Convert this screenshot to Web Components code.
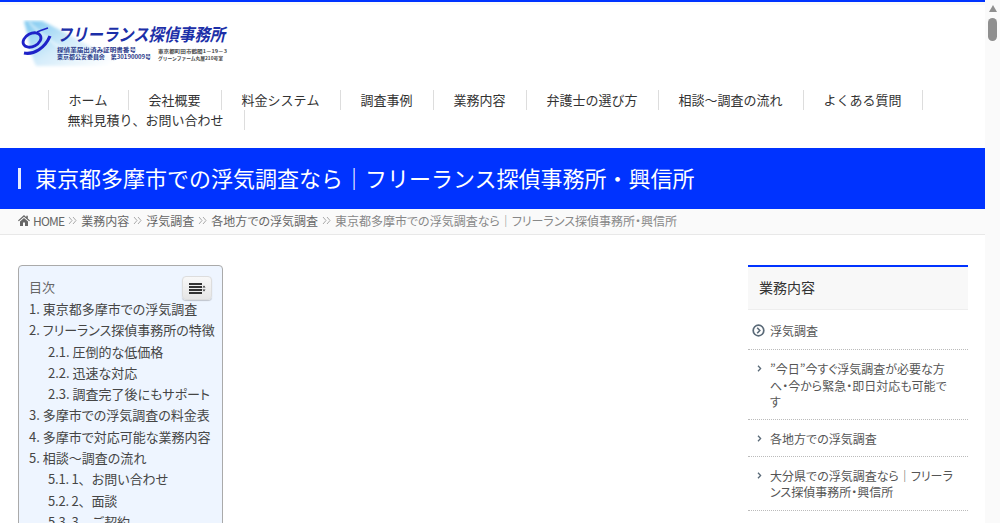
<!DOCTYPE html>
<html lang="ja">
<head>
<meta charset="utf-8">
<title>東京都多摩市での浮気調査なら</title>
<style>
  html, body { margin: 0; height: 523px; overflow: hidden; background: #fff; }
  body { font-family: "Noto Sans CJK JP", "Liberation Sans", sans-serif; color: #555; }
  .app { display: flex; height: 523px; overflow: hidden; }
  .page { width: 985px; flex: none; display: block; height: 523px; overflow: hidden; }
</style>
</head>
<body>
<div class="app">
  <div class="page">
    <site-header></site-header>
    <title-band>東京都多摩市での浮気調査なら｜フリーランス探偵事務所・興信所</title-band>
    <bread-crumb></bread-crumb>
    <main-area></main-area>
  </div>
  <fake-scrollbar></fake-scrollbar>
</div>

<script>
const navItems = ['ホーム', '会社概要', '料金システム', '調査事例', '業務内容', '弁護士の選び方', '相談～調査の流れ', 'よくある質問', '無料見積り、お問い合わせ'];

const tocItems = [
  [0, '1. 東京都多摩市での浮気調査'],
  [0, '2. フリーランス探偵事務所の特徴'],
  [1, '2.1. 圧倒的な低価格'],
  [1, '2.2. 迅速な対応'],
  [1, '2.3. 調査完了後にもサポート'],
  [0, '3. 多摩市での浮気調査の料金表'],
  [0, '4. 多摩市で対応可能な業務内容'],
  [0, '5. 相談～調査の流れ'],
  [2, '5.1. 1、お問い合わせ'],
  [2, '5.2. 2、面談'],
  [2, '5.3. 3、ご契約'],
];

const sideItems = [
  '”今日”今すぐ浮気調査が必要な方<br>へ・今から緊急・即日対応も可能で<br>す',
  '各地方での浮気調査',
  '大分県での浮気調査なら｜フリーラ<br>ンス探偵事務所・興信所',
];

class SiteHeader extends HTMLElement {
  constructor() {
    super();
    const root = this.attachShadow({ mode: 'open' });
    const links = navItems.map((t) => `<a>${t}</a>`).join('');
    root.innerHTML = `
      <style>
        :host { display: block; height: 148px; box-sizing: border-box; border-top: 2px solid #0033ff; background: #fff; }
        .strip { height: 3px; background: #fafafa; }
        .logo { display: block; margin: 15px 0 0 20px; width: 212px; height: 50px; }
        nav { display: flex; flex-wrap: wrap; margin: 20px 40px 0 48px; font-size: 13px; line-height: 20px; color: #333; font-kerning: none; }
        a { padding: 0 20.5px 0 19.5px; border-right: 1px solid #ddd; white-space: nowrap; }
        a:first-child { border-left: 1px solid #ddd; }
      </style>
      <div class="strip"></div>
      <svg class="logo" viewBox="0 0 212 50">
        <defs>
          <linearGradient id="sky" x1="0" y1="0" x2="1" y2="0.7">
            <stop offset="0" stop-color="#7cc8f0"/>
            <stop offset="0.5" stop-color="#d4ecfa"/>
            <stop offset="1" stop-color="#ffffff"/>
          </linearGradient>
          <filter id="soft"><feGaussianBlur stdDeviation="1.6"/></filter>
        </defs>
        <path d="M4 1 H22 C42 10 70 28 112 46 H16 C10 34 8 14 4 1Z" fill="url(#sky)" filter="url(#soft)"/>
        <path d="M9 2 C16 10 30 22 60 40" fill="none" stroke="#fff" stroke-width="2" opacity="0.6" filter="url(#soft)"/>
        <g fill="none" stroke="#1e22c8">
          <ellipse cx="12" cy="20" rx="9.5" ry="6.5" transform="rotate(-28 12 20)" stroke-width="2.8"/>
          <path d="M17 12 C21 10 25 9 28 8" stroke-width="1.4"/>
          <path d="M4 33 C14 35 25 28 30 16" stroke-width="3.2"/>
        </g>
        <text x="37" y="21" font-size="17.4" font-weight="700" font-style="italic" fill="#1c2fa8" textLength="168" lengthAdjust="spacingAndGlyphs">フリーランス探偵事務所</text>
        <text x="37" y="31.5" font-size="5.6" font-weight="700" fill="#2a3a8a" textLength="79" lengthAdjust="spacingAndGlyphs">探偵業届出済み証明書番号</text>
        <text x="37" y="39" font-size="5.6" font-weight="700" fill="#2a3a8a" textLength="94" lengthAdjust="spacingAndGlyphs">東京都公安委員会　第30190009号</text>
        <text x="138" y="33" font-size="4.8" font-weight="700" fill="#444" textLength="69" lengthAdjust="spacingAndGlyphs">東京都町田市鶴間1－19－3</text>
        <text x="138" y="39.5" font-size="4.8" font-weight="700" fill="#444" textLength="65" lengthAdjust="spacingAndGlyphs">グリーンファーム丸屋210号室</text>
      </svg>
      <nav>${links}</nav>`;
  }
}

class TitleBand extends HTMLElement {
  constructor() {
    super();
    const root = this.attachShadow({ mode: 'open' });
    root.innerHTML = `
      <style>
        :host { display: flex; align-items: center; height: 61px; background: #0033ff; padding-left: 18px; }
        .bar { width: 3px; height: 21px; margin: 0 14px 1px 0; background-image: radial-gradient(#fff 0.6px, #cdd6ff 0.8px); background-size: 2px 2px; }
        h1 { margin: 0 0 3px; font-size: 22px; font-weight: 400; line-height: 30px; color: #fff; white-space: nowrap; }
      </style>
      <span class="bar"></span>
      <h1><slot></slot></h1>`;
  }
}

class BreadCrumb extends HTMLElement {
  constructor() {
    super();
    const root = this.attachShadow({ mode: 'open' });
    const parts = ['業務内容', '浮気調査', '各地方での浮気調査', '東京都多摩市での浮気調査なら｜フリーランス探偵事務所・興信所'];
    const chev = `<svg class="sep" viewBox="0 0 9 9"><path d="M1 1l3 3.5-3 3.5M5 1l3 3.5-3 3.5" fill="none" stroke="#aaa" stroke-width="1"/></svg>`;
    const html = parts.map((p, i) => `${chev}<span class="${i === 3 ? 'last' : ''}">${p}</span>`).join('');
    root.innerHTML = `
      <style>
        :host { display: flex; align-items: center; height: 26px; box-sizing: border-box; padding: 0 0 2px 18px; background: #fafafa; border-bottom: 1px solid #e8e8e8; font-size: 12px; color: #666; white-space: nowrap; font-feature-settings: "palt"; }
        .home { width: 12px; height: 11px; margin-right: 3px; }
        .word { letter-spacing: -0.8px; }
        .sep { width: 9px; height: 9px; margin: 0 4px; }
        .last { color: #888; }
      </style>
      <svg class="home" viewBox="0 0 12 11"><path d="M6 0L0 5.5l.8.8L6 1.7l5.2 4.6.8-.8L9.8 3.5V.8H8.3v1.4zM2 6.6V11h3V7.6h2V11h3V6.6L6 3z" fill="#666"/></svg>
      <span class="word">HOME</span>${html}`;
  }
}

class TocBox extends HTMLElement {
  constructor() {
    super();
    const root = this.attachShadow({ mode: 'open' });
    const rows = tocItems.map(([lv, t]) => `<li class="lv${lv}">${t}</li>`).join('');
    root.innerHTML = `
      <style>
        :host { display: block; width: 205px; box-sizing: border-box; border: 1px solid #aaa; border-radius: 4px; background: #eef5ff; padding: 10px; font-size: 13px; color: #454545; font-feature-settings: "palt"; }
        .head { display: flex; justify-content: space-between; align-items: flex-start; height: 24px; margin-bottom: -2px; }
        .label { font-size: 13px; line-height: 22px; color: #666; }
        .toggle { display: flex; align-items: center; justify-content: center; width: 30px; height: 24px; box-sizing: border-box; border: 1px solid #ddd; border-radius: 4px; background: linear-gradient(#f8f8f8, #e6e6e6); box-shadow: 0 1px 1px #0003; }
        ul { list-style: none; margin: 0; padding: 0; }
        li { line-height: 21.3px; white-space: nowrap; }
        .lv1, .lv2 { padding-left: 19px; }
        .lv2 { font-feature-settings: normal; letter-spacing: -0.2px; }
      </style>
      <div class="head">
        <span class="label">目次</span>
        <span class="toggle">
          <svg width="17" height="11" viewBox="0 0 17 11"><path d="M0 0h13v2H0zM0 3h13v2H0zM0 6h13v2H0zM0 9h13v2H0z" fill="#333"/><path d="M13.5 4.5l1.5-2 1.5 2zM13.5 6.5l1.5 2 1.5-2z" fill="#333"/></svg>
        </span>
      </div>
      <ul>${rows}</ul>`;
  }
}

class SideMenu extends HTMLElement {
  constructor() {
    super();
    const root = this.attachShadow({ mode: 'open' });
    const chev = `<svg class="chev" viewBox="0 0 5 7"><path d="M1 .8L3.6 3.5 1 6.2" fill="none" stroke="#5a6a78" stroke-width="1.3"/></svg>`;
    const rows = sideItems.map((t) => `<li>${chev}<span>${t}</span></li>`).join('');
    root.innerHTML = `
      <style>
        :host { display: block; width: 220px; font-size: 12px; color: #555; font-feature-settings: "palt"; }
        h3 { margin: 0; height: 41px; line-height: 41px; padding: 0 0 1px 11px; border-top: 2px solid #0033ff; border-bottom: 1px solid #eee; background: #f8f8f8; font-size: 14px; font-weight: 400; color: #333; font-feature-settings: normal; }
        ul { list-style: none; margin: 0; padding: 0; }
        li { display: flex; padding: 11px 4px 9px 9px; line-height: 16.2px; border-bottom: 1px dotted #bbb; white-space: nowrap; }
        li.current { padding-top: 12.6px; padding-bottom: 10.6px; padding-left: 4px; }
        .chev { flex: none; width: 5px; height: 7px; margin: 4px 8px 0 0; }
        .ring { flex: none; width: 13px; height: 13px; margin: 1px 5px 0 0; }
      </style>
      <h3>業務内容</h3>
      <ul>
        <li class="current">
          <svg class="ring" viewBox="0 0 13 13"><circle cx="6.5" cy="6.5" r="5.3" fill="none" stroke="#5a6a78" stroke-width="1.7"/><path d="M5.2 3.8L7.8 6.5 5.2 9.2" fill="none" stroke="#5a6a78" stroke-width="1.6"/></svg>
          <span>浮気調査</span>
        </li>
        ${rows}
      </ul>`;
  }
}

class MainArea extends HTMLElement {
  constructor() {
    super();
    const root = this.attachShadow({ mode: 'open' });
    root.innerHTML = `
      <style>
        :host { display: flex; justify-content: space-between; align-items: flex-start; padding: 30px 17px 0 18px; }
      </style>
      <toc-box></toc-box>
      <side-menu></side-menu>`;
  }
}

class FakeScrollbar extends HTMLElement {
  constructor() {
    super();
    const root = this.attachShadow({ mode: 'open' });
    root.innerHTML = `
      <style>
        :host { display: flex; flex-direction: column; align-items: center; flex: none; width: 15px; height: 523px; background: #fafafa; }
        .up { width: 0; height: 0; margin-top: 5px; border-left: 4.5px solid transparent; border-right: 4.5px solid transparent; border-bottom: 7px solid #8f8f8f; }
        .thumb { width: 9px; height: 23px; margin-top: 6px; border-radius: 4.5px; background: #8f8f8f; }
      </style>
      <div class="up"></div>
      <div class="thumb"></div>`;
  }
}

customElements.define('site-header', SiteHeader);
customElements.define('title-band', TitleBand);
customElements.define('bread-crumb', BreadCrumb);
customElements.define('toc-box', TocBox);
customElements.define('side-menu', SideMenu);
customElements.define('main-area', MainArea);
customElements.define('fake-scrollbar', FakeScrollbar);
</script>
</body>
</html>
